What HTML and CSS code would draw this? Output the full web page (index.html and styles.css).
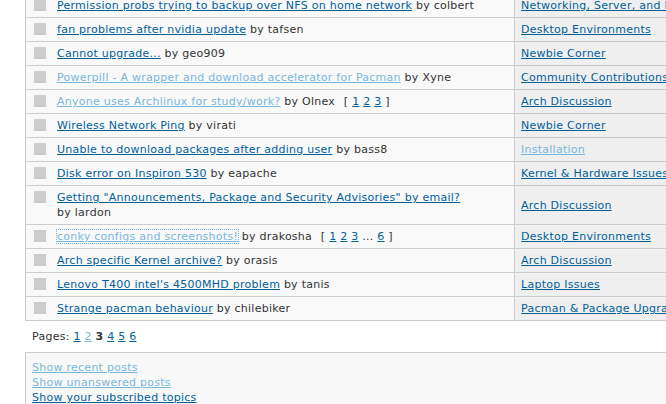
FILE: index.html
```html
<!DOCTYPE html>
<html>
<head>
    <meta charset="utf-8">
    <link rel="stylesheet" href="styles.css">
</head>
<body>
<div class="page">
    <table class="topics">
        <tr>
            <td class="tcl"><div class="tcell"><span class="icon"></span><div><a href="#">Permission probs trying to backup over NFS on home network</a> <span class="byuser">by colbert</span></div></div></td>
            <td class="tcf"><a href="#">Networking, Server, and Protection</a></td>
        </tr>
        <tr>
            <td class="tcl"><div class="tcell"><span class="icon"></span><div><a href="#">fan problems after nvidia update</a> <span class="byuser">by tafsen</span></div></div></td>
            <td class="tcf"><a href="#">Desktop Environments</a></td>
        </tr>
        <tr>
            <td class="tcl"><div class="tcell"><span class="icon"></span><div><a href="#">Cannot upgrade...</a> <span class="byuser">by geo909</span></div></div></td>
            <td class="tcf"><a href="#">Newbie Corner</a></td>
        </tr>
        <tr>
            <td class="tcl"><div class="tcell"><span class="icon"></span><div><a class="visited" href="#">Powerpill - A wrapper and download accelerator for Pacman</a> <span class="byuser">by Xyne</span></div></div></td>
            <td class="tcf"><a href="#">Community Contributions</a></td>
        </tr>
        <tr>
            <td class="tcl"><div class="tcell"><span class="icon"></span><div><a class="visited" href="#">Anyone uses Archlinux for study/work?</a> <span class="byuser">by Olnex</span> <span class="pagestext">[ <a href="#">1</a> <a href="#">2</a> <a href="#">3</a> ]</span></div></div></td>
            <td class="tcf"><a href="#">Arch Discussion</a></td>
        </tr>
        <tr>
            <td class="tcl"><div class="tcell"><span class="icon"></span><div><a href="#">Wireless Network Ping</a> <span class="byuser">by virati</span></div></div></td>
            <td class="tcf"><a href="#">Newbie Corner</a></td>
        </tr>
        <tr>
            <td class="tcl"><div class="tcell"><span class="icon"></span><div><a href="#">Unable to download packages after adding user</a> <span class="byuser">by bass8</span></div></div></td>
            <td class="tcf"><a class="visited" href="#">Installation</a></td>
        </tr>
        <tr>
            <td class="tcl"><div class="tcell"><span class="icon"></span><div><a href="#">Disk error on Inspiron 530</a> <span class="byuser">by eapache</span></div></div></td>
            <td class="tcf"><a href="#">Kernel &amp; Hardware Issues</a></td>
        </tr>
        <tr>
            <td class="tcl"><div class="tcell"><span class="icon"></span><div><a href="#">Getting "Announcements, Package and Security Advisories" by email?</a> <span class="byuser">by lardon</span></div></div></td>
            <td class="tcf"><a href="#">Arch Discussion</a></td>
        </tr>
        <tr>
            <td class="tcl"><div class="tcell"><span class="icon"></span><div><a class="visited focused" href="#">conky configs and screenshots!</a> <span class="byuser">by drakosha</span> <span class="pagestext">[ <a href="#">1</a> <a href="#">2</a> <a href="#">3</a> &hellip; <a href="#">6</a> ]</span></div></div></td>
            <td class="tcf"><a href="#">Desktop Environments</a></td>
        </tr>
        <tr>
            <td class="tcl"><div class="tcell"><span class="icon"></span><div><a href="#">Arch specific Kernel archive?</a> <span class="byuser">by orasis</span></div></div></td>
            <td class="tcf"><a href="#">Arch Discussion</a></td>
        </tr>
        <tr>
            <td class="tcl"><div class="tcell"><span class="icon"></span><div><a href="#">Lenovo T400 intel's 4500MHD problem</a> <span class="byuser">by tanis</span></div></div></td>
            <td class="tcf"><a href="#">Laptop Issues</a></td>
        </tr>
        <tr>
            <td class="tcl"><div class="tcell"><span class="icon"></span><div><a href="#">Strange pacman behaviour</a> <span class="byuser">by chilebiker</span></div></div></td>
            <td class="tcf"><a href="#">Pacman &amp; Package Upgrade Issues</a></td>
        </tr>
    </table>

    <p class="pagelink">Pages: <a href="#">1</a> <a class="visited" href="#">2</a> <strong>3</strong> <a href="#">4</a> <a href="#">5</a> <a href="#">6</a></p>

    <div class="linksbox">
        <a class="visited" href="#">Show recent posts</a>
        <a class="visited" href="#">Show unanswered posts</a>
        <a href="#">Show your subscribed topics</a>
    </div>
</div>
</body>
</html>
```

FILE: styles.css
```css
html, body {
    margin: 0;
    background-color: #fff;
    overflow: hidden;
}
body {
    font-family: "DejaVu Sans", Verdana, sans-serif;
    font-size: 11px;
    line-height: 15px;
    letter-spacing: 0.26px;
    color: #333;
}
a {
    color: #005f99;
}
a.visited {
    color: #7ab7dc;
}
a.focused {
    outline: 1px dotted #7ab7dc;
}
.page {
    width: 760px;
    margin-top: -6px;
}
.topics {
    margin-left: 25px;
    width: 735px;
    border-collapse: collapse;
    border-left: 1px solid #ccc;
}
.topics td {
    border-bottom: 1px solid #ccc;
    padding: 4px 6px;
    vertical-align: middle;
}
.topics .tcl {
    width: 474px;
    background-color: #f9f9f9;
    padding-left: 8px;
    border-right: 1px solid #ccc;
}
.topics .tcf {
    background-color: #efefef;
    white-space: nowrap;
}
.tcell {
    display: flex;
    gap: 11px;
}
.icon {
    flex: none;
    width: 12px;
    height: 12px;
    margin-top: 1px;
    background-color: #ccc;
}
.byuser {
    white-space: nowrap;
}
.pagestext {
    margin-left: 5px;
}
.pagelink {
    margin: 0;
    padding: 8px 7px 8px 32px;
}
.linksbox {
    margin-left: 25px;
    border-top: 1px solid #ccc;
    border-left: 1px solid #ccc;
    background-color: #f8f8f8;
    padding: 7px 6px;
    height: 60px;
}
.linksbox a {
    display: block;
}
```
